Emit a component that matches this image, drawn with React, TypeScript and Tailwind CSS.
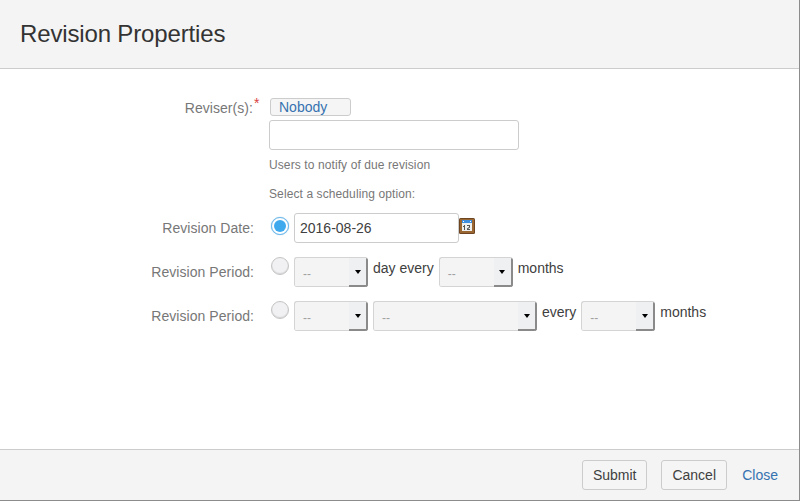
import React from 'react';

const font = "font-['Liberation_Sans',Arial,sans-serif]";

const Label: React.FC<{ children: React.ReactNode; required?: boolean }> = ({ children, required }) => (
  <div className="w-[254px] shrink-0 text-right text-[14px] leading-[20px] tracking-[0.05px] text-[#777777]">
    {children}
    {required && <span className="relative -top-[5px] ml-px inline-block w-0 text-left text-[14px] text-[#d9413d]">*</span>}
  </div>
);

const Radio: React.FC<{ checked?: boolean }> = ({ checked }) => (
  <div
    className={`h-[18px] w-[18px] shrink-0 rounded-full border ${
      checked
        ? 'border-[#6db8ea] bg-white p-[2px] shadow-[0_0_1px_#6db8ea]'
        : 'border-[#c4c4c4] bg-[#f1f1f3] shadow-[inset_0_-1px_1px_rgba(0,0,0,0.12)]'
    }`}
  >
    {checked && <div className="h-full w-full rounded-full bg-[#3fa9ee]" />}
  </div>
);

const Select: React.FC<{ width: string }> = ({ width }) => (
  <div className={`flex h-[30px] shrink-0 items-stretch overflow-hidden rounded-[3px] border-t border-l border-[#d4d4d4] bg-[#f4f4f5] ${width}`}>
    <div className="flex-1 border-b border-[#d4d4d4] pl-[8px] pt-[8px] text-[12px] leading-[16px] text-[#a0a0a0]">--</div>
    <div className="flex w-[19px] items-center justify-center border-r-2 border-b-2 border-[#8a8a8a] bg-[#eef0f2]">
      <div className="h-0 w-0 border-x-[3.5px] border-t-[4px] border-x-transparent border-t-black" />
    </div>
  </div>
);

const CalendarIcon = () => (
  <svg width="16" height="16" viewBox="0 0 16 16" className="shrink-0">
    <rect x="0" y="0" width="16" height="16" rx="1.5" fill="#6e4520" />
    <rect x="1" y="1" width="14" height="14" fill="#9a6632" />
    <rect x="3" y="2" width="10" height="11" fill="#eef0f0" />
    <rect x="3" y="2" width="10" height="3" fill="#3d8ede" />
    <rect x="4" y="3" width="1" height="1" fill="#ffffff" />
    <rect x="11" y="3" width="1" height="1" fill="#ffffff" />
    <path d="M5 7h1v5H5zM4 8h1v1H4zM8 7h3v2.5l-2 1.5h2v1H8v-1.500l2-1.500V8H8z" fill="#555555" />
  </svg>
);

export default function App() {
  return (
    <div className={`flex h-[501px] w-[800px] flex-col overflow-hidden border-r border-b border-[#8c8c8c] bg-white ${font}`}>
      <header className="flex h-[69px] shrink-0 items-center border-b border-[#cccccc] bg-[#f4f4f4] px-[20px]">
        <h1 className="-mt-px text-[24px] leading-[30px] tracking-[-0.15px] text-[#333333]">Revision Properties</h1>
      </header>

      <main className="flex flex-1 flex-col pt-[29px]">
        <div className="flex">
          <div>
            <Label required>Reviser(s):</Label>
          </div>
          <div className="ml-[15px]">
            <div className="ml-px h-[18px] w-[81px] rounded-[3px] border border-[#cccccc] bg-[#f5f5f5] pl-[8px] text-[14px] leading-[16px] text-[#3572b0]">
              Nobody
            </div>
            <div className="mt-[4px] h-[30px] w-[250px] rounded-[3px] border border-[#cccccc] bg-white" />
            <p className="mt-[7px] text-[12px] leading-[16px] tracking-[0.1px] text-[#777777]">Users to notify of due revision</p>
            <p className="mt-[13px] text-[12px] leading-[16px] tracking-[0.1px] text-[#777777]">Select a scheduling option:</p>
          </div>
        </div>

        <div className="mt-[11px] flex">
          <div className="pt-[5px]">
            <Label>Revision Date:</Label>
          </div>
          <div className="ml-[17px] pt-[4px]">
            <Radio checked />
          </div>
          <div className="ml-[5px] flex h-[30px] w-[165px] items-center rounded-[3px] border border-[#cccccc] bg-white pl-[5px] text-[14px] text-[#404040]">
            2016-08-26
          </div>
          <div className="pt-[5px]">
            <CalendarIcon />
          </div>
        </div>

        <div className="mt-[14px] flex">
          <div className="pt-[5px]">
            <Label>Revision Period:</Label>
          </div>
          <div className="ml-[17px]">
            <Radio />
          </div>
          <div className="ml-[5px] flex items-start gap-[5px] text-[14px] leading-[20px] text-[#404040]">
            <Select width="w-[74px]" />
            <span className="pt-px">day every</span>
            <Select width="w-[74px]" />
            <span className="pt-px">months</span>
          </div>
        </div>

        <div className="mt-[14px] flex">
          <div className="pt-[5px]">
            <Label>Revision Period:</Label>
          </div>
          <div className="ml-[17px]">
            <Radio />
          </div>
          <div className="ml-[5px] flex items-start gap-[5px] text-[14px] leading-[20px] text-[#404040]">
            <Select width="w-[74px]" />
            <Select width="w-[164px]" />
            <span className="pt-px">every</span>
            <Select width="w-[74px]" />
            <span className="pt-px">months</span>
          </div>
        </div>
      </main>

      <footer className="flex h-[51px] shrink-0 items-center justify-end border-t border-[#cccccc] bg-[#f4f4f4] pr-[21px]">
        <button className="h-[30px] w-[65px] rounded-[3px] border border-[#cccccc] bg-[#f5f5f5] text-[14px] text-[#404040]">Submit</button>
        <button className="ml-[14px] h-[30px] w-[66px] rounded-[3px] border border-[#cccccc] bg-[#f5f5f5] text-[14px] text-[#404040]">Cancel</button>
        <a className="ml-[15px] text-[14px] text-[#3572b0]">Close</a>
      </footer>
    </div>
  );
}
